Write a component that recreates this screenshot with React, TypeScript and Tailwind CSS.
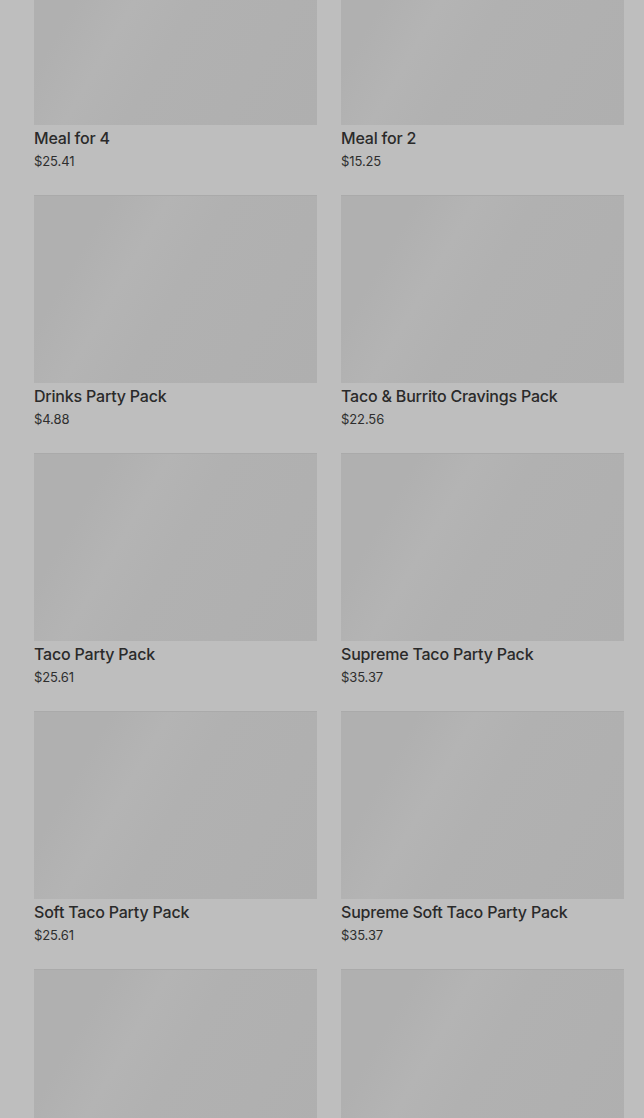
import React from "react";

const items = [
  { name: "Meal for 4", price: "$25.41" },
  { name: "Meal for 2", price: "$15.25" },
  { name: "Drinks Party Pack", price: "$4.88" },
  { name: "Taco & Burrito Cravings Pack", price: "$22.56" },
  { name: "Taco Party Pack", price: "$25.61" },
  { name: "Supreme Taco Party Pack", price: "$35.37" },
  { name: "Soft Taco Party Pack", price: "$25.61" },
  { name: "Supreme Soft Taco Party Pack", price: "$35.37" },
  { name: "", price: "" },
  { name: "", price: "" },
];

export default function App() {
  return (
    <div
      className="w-[644px] h-[1118px] overflow-hidden bg-[#bebebe]"
      style={{ fontFamily: "Inter, 'Open Sans', sans-serif" }}
    >
      <div className="grid grid-cols-2 gap-x-[24px] gap-y-[25px] pl-[34px] pr-[20px] mt-[-63px]">
        {items.map((it, i) => (
          <div key={i} className="flex flex-col">
            <div className="h-[188px] bg-[linear-gradient(120deg,#b0b0b0_0%,#b0b0b0_20%,#b4b4b4_35%,#b1b1b1_50%,#afafaf_100%)] border-t border-[#aaaaaa]" />
            {it.name && (
              <div className="pt-[3px]">
                <div className="text-[16px] leading-[20px] font-medium text-[#2a2a2a] tracking-[-0.2px]">
                  {it.name}
                </div>
                <div className="text-[13px] leading-[18px] mt-[4px] text-[#2e2e2e] tracking-[-0.1px]">
                  {it.price}
                </div>
              </div>
            )}
          </div>
        ))}
      </div>
    </div>
  );
}
